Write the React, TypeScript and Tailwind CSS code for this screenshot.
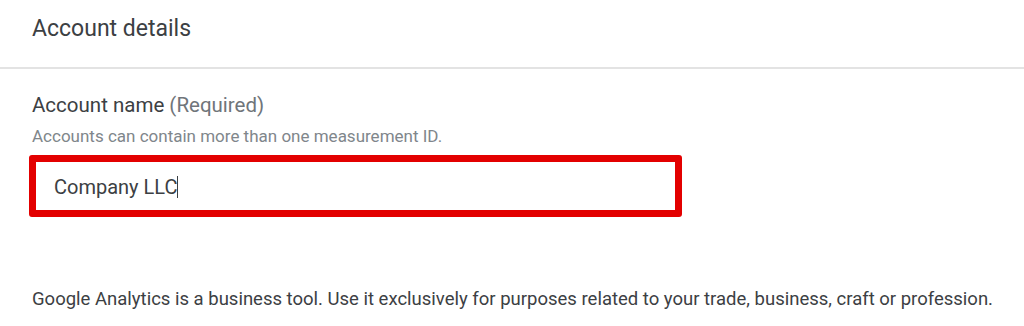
export default function App() {
  return (
    <div className="w-[1024px] h-[326px] bg-white overflow-hidden font-['Roboto',sans-serif] text-[#3c4043]">
      {/* Card header */}
      <div className="h-[69px] border-b-2 border-[#e3e3e3] px-8 pt-[15px]">
        <h2 className="text-[23px] leading-[28px] font-normal">Account details</h2>
      </div>

      {/* Account name field */}
      <div className="px-8 pt-[24px]">
        <div className="text-[20.5px] leading-[24px]">
          Account name <span className="text-[#70757a]">(Required)</span>
        </div>
        <p className="mt-[9px] text-[17px] leading-[20px] text-[#80868b]">
          Accounts can contain more than one measurement ID.
        </p>
      </div>

      <div className="ml-[29px] mt-[9px] w-[653px] h-[62px] border-[7px] border-[#e30000] rounded-[3px] flex items-center pl-[18px] pt-[2px]">
        <span className="text-[20px] leading-[24px] text-[#3c4043]">Company LLC</span>
        <span className="w-px h-[22px] bg-[#3c4043]" />
      </div>

      <p className="px-8 mt-[70px] text-[18.5px] leading-[24px] text-[#3c4043] whitespace-nowrap">
        Google Analytics is a business tool. Use it exclusively for purposes related to your trade, business, craft or profession.
      </p>
    </div>
  )
}
